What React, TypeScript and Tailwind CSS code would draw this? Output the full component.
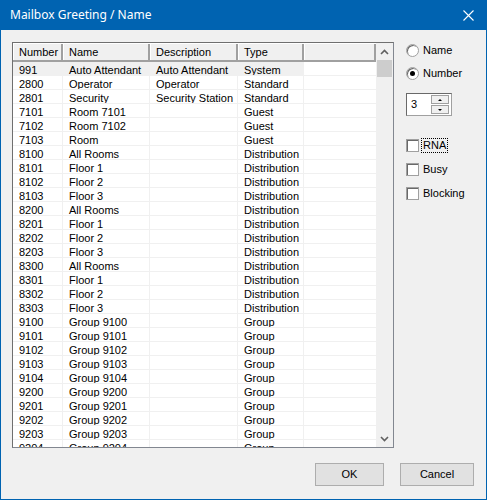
import React from 'react';

type Row = { num: string; name: string; desc: string; type: string };

const ROWS: Row[] = [
  { num: '991', name: 'Auto Attendant', desc: 'Auto Attendant', type: 'System' },
  { num: '2800', name: 'Operator', desc: 'Operator', type: 'Standard' },
  { num: '2801', name: 'Security', desc: 'Security Station', type: 'Standard' },
  { num: '7101', name: 'Room 7101', desc: '', type: 'Guest' },
  { num: '7102', name: 'Room 7102', desc: '', type: 'Guest' },
  { num: '7103', name: 'Room', desc: '', type: 'Guest' },
  { num: '8100', name: 'All Rooms', desc: '', type: 'Distribution' },
  { num: '8101', name: 'Floor 1', desc: '', type: 'Distribution' },
  { num: '8102', name: 'Floor 2', desc: '', type: 'Distribution' },
  { num: '8103', name: 'Floor 3', desc: '', type: 'Distribution' },
  { num: '8200', name: 'All Rooms', desc: '', type: 'Distribution' },
  { num: '8201', name: 'Floor 1', desc: '', type: 'Distribution' },
  { num: '8202', name: 'Floor 2', desc: '', type: 'Distribution' },
  { num: '8203', name: 'Floor 3', desc: '', type: 'Distribution' },
  { num: '8300', name: 'All Rooms', desc: '', type: 'Distribution' },
  { num: '8301', name: 'Floor 1', desc: '', type: 'Distribution' },
  { num: '8302', name: 'Floor 2', desc: '', type: 'Distribution' },
  { num: '8303', name: 'Floor 3', desc: '', type: 'Distribution' },
  { num: '9100', name: 'Group 9100', desc: '', type: 'Group' },
  { num: '9101', name: 'Group 9101', desc: '', type: 'Group' },
  { num: '9102', name: 'Group 9102', desc: '', type: 'Group' },
  { num: '9103', name: 'Group 9103', desc: '', type: 'Group' },
  { num: '9104', name: 'Group 9104', desc: '', type: 'Group' },
  { num: '9200', name: 'Group 9200', desc: '', type: 'Group' },
  { num: '9201', name: 'Group 9201', desc: '', type: 'Group' },
  { num: '9202', name: 'Group 9202', desc: '', type: 'Group' },
  { num: '9203', name: 'Group 9203', desc: '', type: 'Group' },
  { num: '9204', name: 'Group 9204', desc: '', type: 'Group' },
];

// column widths: Number, Name, Description, Type, filler
const COLS = ['w-[50px]', 'w-[87px]', 'w-[88px]', 'w-[66px]', 'flex-1'];

function HeaderCell({ label, w }: { label: string; w: string }) {
  return (
    <div className={`${w} shrink-0 h-full pl-[5px] flex items-center border-r-2 border-r-[#a0a0a0] border-l border-l-white`}>
      {label}
    </div>
  );
}

function Radio({ label, checked }: { label: string; checked?: boolean }) {
  return (
    <div className="flex items-center h-[14px]">
      <span className="w-[13px] h-[13px] rounded-full border border-[#a0a0a0] bg-white flex items-center justify-center shadow-[inset_1px_1px_0_#696969]">
        {checked && <span className="w-[5px] h-[5px] rounded-full bg-black" />}
      </span>
      <span className="ml-[4px]">{label}</span>
    </div>
  );
}

function Check({ label, focus }: { label: string; focus?: boolean }) {
  return (
    <div className="flex items-center h-[14px]">
      <span className="w-[13px] h-[13px] bg-white border border-[#a0a0a0] shadow-[inset_1px_1px_0_#696969]" />
      <span className={`ml-[3px] px-[1px] leading-[13px] ${focus ? 'outline outline-1 outline-dotted outline-black' : ''}`}>{label}</span>
    </div>
  );
}

export default function App() {
  return (
    <div
      className="w-[487px] h-[500px] flex flex-col bg-[#0063b1] border border-[#0063b1] border-t-0 text-[11px] text-black"
      style={{ fontFamily: '"Liberation Sans", Arial, sans-serif' }}
    >
      {/* title bar */}
      <div className="h-[30px] shrink-0 flex items-center justify-between pl-[9px] pr-[11px] text-white">
        <span className="text-[12px]" style={{ fontFamily: '"Noto Sans", "Open Sans", sans-serif' }}>
          Mailbox Greeting / Name
        </span>
        <svg width="11" height="11" viewBox="0 0 11 11" className="mr-[1px]">
          <path d="M0.5 0.5 L10.5 10.5 M10.5 0.5 L0.5 10.5" stroke="white" strokeWidth="1.1" />
        </svg>
      </div>

      {/* body */}
      <div className="flex-1 bg-[#f0f0f0] flex flex-col pl-[11px] pr-[12px] pt-[12px]">
        <div className="flex">
          {/* list box */}
          <div className="w-[382px] h-[406px] bg-white flex border border-[#828790] border-l-[#6f6f6f] border-t-[#6f6f6f] overflow-hidden">
            <div className="flex-1 flex flex-col overflow-hidden">
              <div className="h-[19px] shrink-0 flex bg-[#f0f0f0] border-b-2 border-b-[#a0a0a0] border-t border-t-white">
                <HeaderCell label="Number" w={COLS[0]} />
                <HeaderCell label="Name" w={COLS[1]} />
                <HeaderCell label="Description" w={COLS[2]} />
                <HeaderCell label="Type" w={COLS[3]} />
                <HeaderCell label="" w={COLS[4]} />
              </div>
              {ROWS.map((r, i) => (
                <div key={r.num} className="h-[14px] shrink-0 flex">
                  <div className={`flex ${i === 0 ? 'bg-[#f0f0f0]' : ''}`}>
                    {[r.num, r.name, r.desc, r.type].map((c, j) => (
                      <div
                        key={j}
                        className={`${COLS[j]} shrink-0 h-full pl-[6px] pt-[1px] leading-[14px] border-r border-b border-[#f0f0f0] whitespace-nowrap overflow-hidden`}
                      >
                        {c}
                      </div>
                    ))}
                  </div>
                  <div className="flex-1 border-b border-[#f0f0f0]" />
                </div>
              ))}
            </div>
            {/* scrollbar */}
            <div className="w-[17px] shrink-0 bg-[#f0f0f0] flex flex-col">
              <div className="h-[17px] flex items-center justify-center">
                <svg width="9" height="6" viewBox="0 0 9 6">
                  <path d="M1 5 L4.5 1.5 L8 5" stroke="#606060" strokeWidth="1.6" fill="none" />
                </svg>
              </div>
              <div className="h-[17px] mx-[1px] bg-[#cdcdcd]" />
              <div className="flex-1" />
              <div className="h-[17px] flex items-center justify-center">
                <svg width="9" height="6" viewBox="0 0 9 6">
                  <path d="M1 1 L4.5 4.5 L8 1" stroke="#606060" strokeWidth="1.6" fill="none" />
                </svg>
              </div>
            </div>
          </div>

          {/* options */}
          <div className="ml-[12px] pt-[1px] flex flex-col">
            <Radio label="Name" />
            <div className="h-[9px]" />
            <Radio label="Number" checked />
            <div className="mt-[13px] w-[46px] h-[23px] flex items-center bg-white border border-[#a0a0a0] border-l-[#696969] border-t-[#696969]">
              <span className="pl-[4px] flex-1">3</span>
              <div className="w-[18px] mr-[2px] flex flex-col gap-[1px]">
                <div className="h-[9px] bg-[#f0f0f0] border border-[#a0a0a0] flex items-center justify-center">
                  <span className="w-0 h-0 border-x-[2px] border-x-transparent border-b-[2px] border-b-black" />
                </div>
                <div className="h-[9px] bg-[#f0f0f0] border border-[#a0a0a0] flex items-center justify-center">
                  <span className="w-0 h-0 border-x-[2px] border-x-transparent border-t-[2px] border-t-black" />
                </div>
              </div>
            </div>
            <div className="mt-[22px] flex flex-col gap-[10px]">
              <Check label="RNA" focus />
              <Check label="Busy" />
              <Check label="Blocking" />
            </div>
          </div>
        </div>

        {/* buttons */}
        <div className="flex justify-end gap-[16px] mt-[15px]">
          <button className="w-[69px] h-[23px] bg-[#e1e1e1] border border-[#adadad]">OK</button>
          <button className="w-[74px] h-[23px] bg-[#e1e1e1] border border-[#adadad]">Cancel</button>
        </div>
      </div>
    </div>
  );
}
